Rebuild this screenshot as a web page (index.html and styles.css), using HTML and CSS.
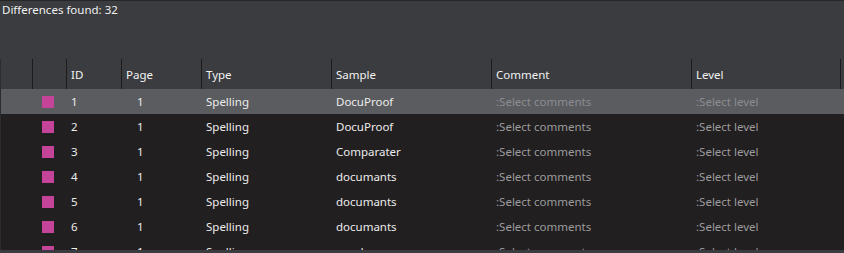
FILE: index.html
```html
<!DOCTYPE html>
<html>
<head>
<meta charset="utf-8">
<link rel="stylesheet" href="styles.css">
</head>
<body>
<div class="app">
  <div class="topline"></div>
  <div class="title">Differences found: 32</div>
  <div class="table">
    <div class="row head">
      <div class="c c0"></div>
      <div class="c c1 sep"></div>
      <div class="c c2 sep">ID</div>
      <div class="c c3 sep">Page</div>
      <div class="c c4 sep">Type</div>
      <div class="c c5 sep">Sample</div>
      <div class="c c6 sep">Comment</div>
      <div class="c c7 sep end">Level</div>
    </div>
    <div class="body">
      <div class="row sel">
        <div class="c c0"></div><div class="c c1"><span class="sw"></span></div>
        <div class="c c2">1</div><div class="c c3 pg">1</div><div class="c c4">Spelling</div>
        <div class="c c5">DocuProof</div><div class="c c6 dim">:Select comments</div><div class="c c7 dim">:Select level</div>
      </div>
      <div class="row">
        <div class="c c0"></div><div class="c c1"><span class="sw"></span></div>
        <div class="c c2">2</div><div class="c c3 pg">1</div><div class="c c4">Spelling</div>
        <div class="c c5">DocuProof</div><div class="c c6 dim">:Select comments</div><div class="c c7 dim">:Select level</div>
      </div>
      <div class="row">
        <div class="c c0"></div><div class="c c1"><span class="sw"></span></div>
        <div class="c c2">3</div><div class="c c3 pg">1</div><div class="c c4">Spelling</div>
        <div class="c c5">Comparater</div><div class="c c6 dim">:Select comments</div><div class="c c7 dim">:Select level</div>
      </div>
      <div class="row">
        <div class="c c0"></div><div class="c c1"><span class="sw"></span></div>
        <div class="c c2">4</div><div class="c c3 pg">1</div><div class="c c4">Spelling</div>
        <div class="c c5">documants</div><div class="c c6 dim">:Select comments</div><div class="c c7 dim">:Select level</div>
      </div>
      <div class="row">
        <div class="c c0"></div><div class="c c1"><span class="sw"></span></div>
        <div class="c c2">5</div><div class="c c3 pg">1</div><div class="c c4">Spelling</div>
        <div class="c c5">documants</div><div class="c c6 dim">:Select comments</div><div class="c c7 dim">:Select level</div>
      </div>
      <div class="row">
        <div class="c c0"></div><div class="c c1"><span class="sw"></span></div>
        <div class="c c2">6</div><div class="c c3 pg">1</div><div class="c c4">Spelling</div>
        <div class="c c5">documants</div><div class="c c6 dim">:Select comments</div><div class="c c7 dim">:Select level</div>
      </div>
      <div class="row">
        <div class="c c0"></div><div class="c c1"><span class="sw"></span></div>
        <div class="c c2">7</div><div class="c c3 pg">1</div><div class="c c4">Spelling</div>
        <div class="c c5">wordssss</div><div class="c c6 dim">:Select comments</div><div class="c c7 dim">:Select level</div>
      </div>
    </div>
  </div>
  <div class="bottom"></div>
</div>
</body>
</html>
```
FILE: styles.css
```css
* { box-sizing: border-box; }
html, body { margin: 0; padding: 0; }
body {
  background: #3b3c40;
  font-family: "Noto Sans", "Open Sans", sans-serif;
  font-size: 11.5px;
  color: #ececec;
  width: 844px;
  height: 253px;
  overflow: hidden;
}
.app { display: flex; flex-direction: column; height: 253px; }
.topline { height: 1px; background: #262628; flex: none; }
.title {
  height: 58px;
  padding: 0 0 0 2px;
  font-size: 11.5px;
  line-height: 17px;
  flex: none;
  color: #f0f0f0;
}
.table {
  flex: none;
  height: 191px;
  border-left: 1px solid #2c2c2f;
  overflow: hidden;
  display: flex;
  flex-direction: column;
}
.row {
  display: grid;
  grid-template-columns: 31px 34px 55px 80px 130px 160px 200px 150px 3px;
  height: 25px;
  align-items: center;
  background: #221f21;
}
.row.head {
  height: 30px;
  background: #3b3c40;
  align-items: stretch;
}
.head .c { display: flex; align-items: center; padding-left: 4px; color: #f2f2f2; }
.head .sep { border-left: 1px solid #1c1c1e; }
.head .end { border-right: 1px solid #1c1c1e; }
.row.sel { background: #5b5c60; }
.body { flex: 1; overflow: hidden; }
.c { white-space: nowrap; line-height: 25px; height: 100%; }
.c2, .c4, .c5, .c6, .c7 { padding-left: 5px; }
.pg { padding-left: 16px; }
.c1 { display: flex; align-items: center; padding-left: 10px; }
.sw { width: 12px; height: 12px; background: #c4449a; display: block; }
.dim { color: #9c9c9c; }
.sel .dim { color: #8c8d91; }
.bottom { height: 3px; background: #3b3c40; flex: none; }
```
